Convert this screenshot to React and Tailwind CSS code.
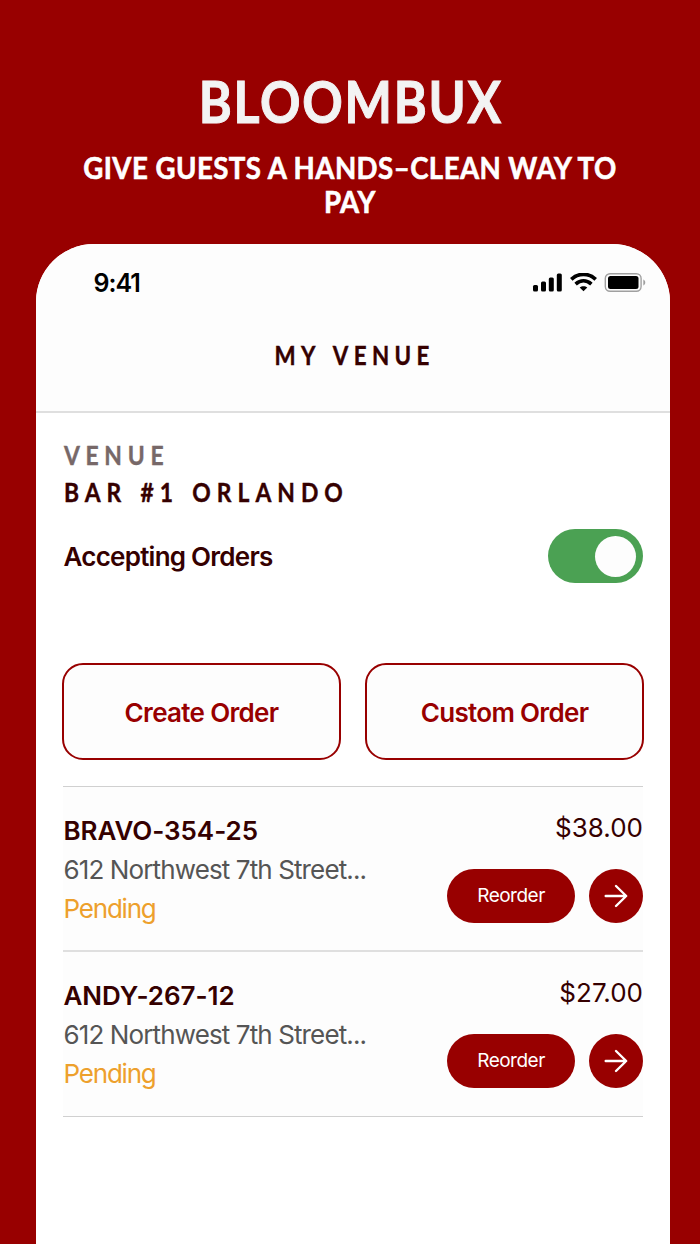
import React from "react";

const orders = [
  { id: "BRAVO-354-25", address: "612 Northwest 7th Street...", status: "Pending", total: "$38.00" },
  { id: "ANDY-267-12", address: "612 Northwest 7th Street...", status: "Pending", total: "$27.00" },
];

function StatusIcons() {
  return (
    <svg className="block h-[20px] w-[114px]" viewBox="0 0 114 20" fill="none">
      <rect x="1" y="12" width="5" height="6.5" rx="1.5" fill="#000" />
      <rect x="9" y="8.500" width="5" height="10" rx="1.5" fill="#000" />
      <rect x="16.800" y="4.500" width="5" height="14" rx="1.5" fill="#000" />
      <rect x="24.800" y="0.500" width="5" height="18" rx="1.5" fill="#000" />
      <path d="M39.300 6.300C46.300-.3 56.700-.3 63.700 6.300" stroke="#000" strokeWidth="3.700" />
      <path d="M43.600 11.100C48.400 6.800 54.600 6.800 59.400 11.100" stroke="#000" strokeWidth="3.600" />
      <path d="M51.500 18.200L47.700 14.600C49.800 12.700 53.200 12.700 55.300 14.600Z" fill="#000" />
      <rect x="73.300" y="0.700" width="35.800" height="17.600" rx="4.800" stroke="#a0a0a0" strokeWidth="1.400" />
      <rect x="76" y="3" width="30.500" height="13" rx="2.500" fill="#000" />
      <path d="M111.300 6.500C113.900 7.500 113.900 11.500 111.300 12.500Z" fill="#a0a0a0" />
    </svg>
  );
}

function OrderRow({ order }) {
  return (
    <li className="flex h-[165px] justify-between border-b-2 border-[#dfdfdf] bg-[#fdfdfd] pt-[24px] last:border-b last:border-[#d0d0d0]">
      <div className="pl-[0.500px] text-[26px] leading-[39px]">
        <h2 className="font-semibold tracking-[-0.050px] text-[#350000]">{order.id}</h2>
        <p className="tracking-[-0.880px] text-[#555]">{order.address}</p>
        <p className="tracking-[-1.200px] text-[#eda02c]">{order.status}</p>
      </div>
      <div className="flex flex-col items-end">
        <p className="h-[58px] text-[26px] leading-[34px] text-[#350000]">{order.total}</p>
        <div className="flex gap-[14px]">
          <button className="h-[54px] w-[128px] rounded-full bg-[#980000] pt-[1px] text-[19px] tracking-[-0.500px] text-white">Reorder</button>
          <button aria-label="View order" className="flex size-[54px] items-center justify-center rounded-full bg-[#980000]">
            <svg className="size-[24px]" viewBox="0 0 24 24" fill="none" stroke="#fff" strokeWidth="2.400" strokeLinecap="round" strokeLinejoin="round">
              <path d="M1.700 12H22M12 2L22.200 12L12 22" />
            </svg>
          </button>
        </div>
      </div>
    </li>
  );
}

export default function App() {
  return (
    <div className="flex h-[1244px] w-[700px] flex-col overflow-hidden bg-[#980000] font-['Inter',sans-serif]">
      <header className="flex h-[243.500px] flex-col items-center pt-[71px] text-center font-['Lato',sans-serif] font-bold">
        <h1 className="scale-x-[0.88] pl-[2px] text-[57px] leading-[60px] tracking-[2px] text-[#f3f3f3] [-webkit-text-stroke:1px_#f3f3f3]">BLOOMBUX</h1>
        <p className="mt-[19px] scale-x-[0.92] text-[30px] leading-[34px] tracking-[0.500px] whitespace-nowrap text-white [-webkit-text-stroke:0.6px_white]">
          GIVE GUESTS A HANDS–CLEAN WAY TO<br />PAY
        </p>
      </header>

      <main className="ml-[36px] flex w-[634px] flex-1 flex-col overflow-hidden rounded-t-[58px] bg-white">
        <div className="h-[169.500px] shrink-0 border-b-2 border-[#dfdfdf] bg-[#fdfdfd]">
          <div className="flex h-[78px] items-center justify-between pr-[24px] pl-[57.500px]">
            <span className="pt-[2px] text-[25px] font-semibold tracking-[-1px] text-black">9:41</span>
            <StatusIcons />
          </div>
          <p className="mt-[16px] scale-x-[0.860] pl-[4px] text-center font-['Lato',sans-serif] text-[26px] leading-[34px] font-bold tracking-[6.300px] [word-spacing:3px] text-[#350000] [-webkit-text-stroke:0.4px_#350000]">MY VENUE</p>
        </div>

        <div className="px-[27px]">
          <div className="origin-left scale-x-[0.880] pt-[24px] pl-[1px] font-['Lato',sans-serif] text-[26px] leading-[37px] font-bold">
            <p className="tracking-[6.500px] text-[#776868] [-webkit-text-stroke:0.4px_#776868]">VENUE</p>
            <p className="tracking-[6.800px] [word-spacing:2px] whitespace-nowrap text-[#350000] [-webkit-text-stroke:0.4px_#350000]">BAR #1 ORLANDO</p>
          </div>
          <div className="mt-[18px] flex h-[54px] items-center justify-between">
            <span className="pt-[1px] pl-[0.500px] text-[26px] font-semibold tracking-[-0.750px] text-[#350000]">Accepting Orders</span>
            <button role="switch" aria-checked="true" aria-label="Accepting Orders" className="flex h-[54px] w-[95px] items-center justify-end rounded-full bg-[#4ba153] pr-[7px]">
              <span className="size-[41px] rounded-full bg-[#fdfdfd]" />
            </button>
          </div>

          <div className="-mx-[1px] mt-[80px] grid h-[97px] grid-cols-2 gap-[24px]">
            <button className="rounded-[21px] border-2 border-[#980000] bg-[#fdfdfd] pt-[1px] text-[26px] font-semibold tracking-[-0.680px] text-[#980000]">Create Order</button>
            <button className="rounded-[21px] border-2 border-[#980000] bg-[#fdfdfd] pt-[1px] text-[26px] font-semibold tracking-[-0.680px] text-[#980000]">Custom Order</button>
          </div>

          <ul className="mt-[26px] border-t border-[#d0d0d0]">
            {orders.map((order) => <OrderRow key={order.id} order={order} />)}
          </ul>
        </div>
      </main>
    </div>
  );
}
